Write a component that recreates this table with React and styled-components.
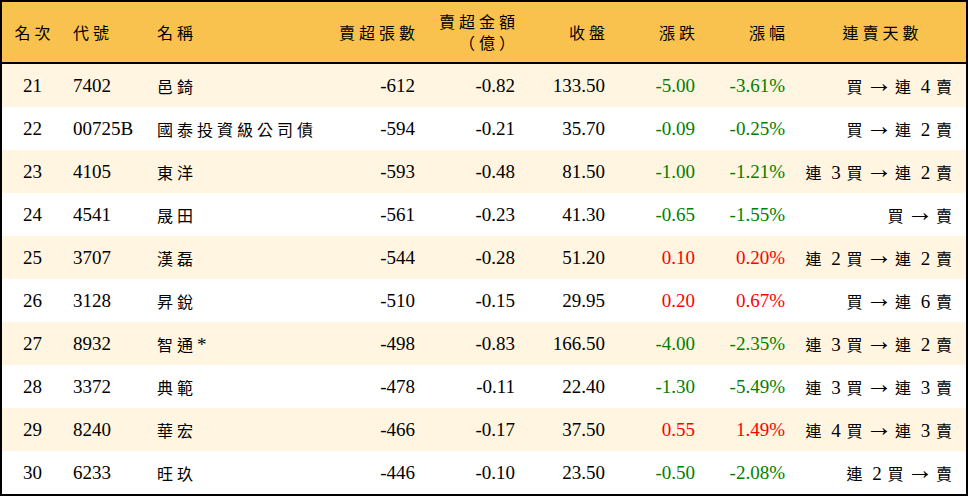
import React from 'react';
import styled, { createGlobalStyle } from 'styled-components';

const headerBg = '#f9c24f';
const stripeBg = '#fff5e0';
const up = '#ff0000';
const down = '#008000';

const rows = [
  ['21', '7402', '邑錡', '-612', '-0.82', '133.50', '-5.00', '-3.61%', '買 → 連 4 賣'],
  ['22', '00725B', '國泰投資級公司債', '-594', '-0.21', '35.70', '-0.09', '-0.25%', '買 → 連 2 賣'],
  ['23', '4105', '東洋', '-593', '-0.48', '81.50', '-1.00', '-1.21%', '連 3 買 → 連 2 賣'],
  ['24', '4541', '晟田', '-561', '-0.23', '41.30', '-0.65', '-1.55%', '買 → 賣'],
  ['25', '3707', '漢磊', '-544', '-0.28', '51.20', '0.10', '0.20%', '連 2 買 → 連 2 賣'],
  ['26', '3128', '昇銳', '-510', '-0.15', '29.95', '0.20', '0.67%', '買 → 連 6 賣'],
  ['27', '8932', '智通*', '-498', '-0.83', '166.50', '-4.00', '-2.35%', '連 3 買 → 連 2 賣'],
  ['28', '3372', '典範', '-478', '-0.11', '22.40', '-1.30', '-5.49%', '連 3 買 → 連 3 賣'],
  ['29', '8240', '華宏', '-466', '-0.17', '37.50', '0.55', '1.49%', '連 4 買 → 連 3 賣'],
  ['30', '6233', '旺玖', '-446', '-0.10', '23.50', '-0.50', '-2.08%', '連 2 買 → 賣'],
];

const GlobalStyle = createGlobalStyle`
  html, body {
    margin: 0;
    padding: 0;
    background: #fff;
  }
`;

// CJK runs get a smaller face with wider tracking, like the mingti in the shot
const Han = styled.span`
  font-family: "Noto Sans CJK TC", sans-serif;
  font-size: 16px;
  letter-spacing: 4px;
  margin-right: ${(p) => (p.$end ? '-4px' : '0')};
`;

const Arrow = styled.span`
  font-family: "Liberation Serif", serif;
  font-size: 27px;
  line-height: 0;
  vertical-align: 1px;
  margin: 0 -3px 0 -7px;
`;

const CJK = /([\u3000-\u9fff\uff00-\uffef]+|→)/;

const Txt = ({ children }) => {
  const parts = String(children).split(CJK).filter((p) => p !== '');
  return parts.map((p, i) => {
    if (p === '→') return <Arrow key={i}>{p}</Arrow>;
    if (/[\u3000-\u9fff\uff00-\uffef]/.test(p)) {
      return <Han key={i} $end={i === parts.length - 1}>{p}</Han>;
    }
    return p;
  });
};

const Sheet = styled.div`
  box-sizing: border-box;
  width: 968px;
  height: 496px;
  border: 2px solid #000;
  font-family: "Liberation Serif", "Noto Sans CJK TC", serif;
  font-size: 19px;
  color: #000;
`;

const Row = styled.div`
  display: grid;
  grid-template-columns: 61px 84px 178px 100px 100px 90px 90px 90px 1fr;
  align-items: center;
  height: 43px;
  background: ${(p) => (p.$stripe ? stripeBg : '#fff')};
`;

const HeadRow = styled(Row)`
  height: 60px;
  background: ${headerBg};
  border-bottom: 2px solid #000;
  line-height: 21px;
`;

const Cell = styled.div`
  padding: 0 10px;
  white-space: nowrap;
  text-align: ${(p) => p.$align || 'right'};
  color: ${(p) => p.$color || 'inherit'};
`;

const TrendCell = styled(Cell)`
  padding-right: 14px;
  word-spacing: 1px;
`;

const tone = (v) => (v.startsWith('-') ? down : up);

export default function App() {
  return (
    <>
      <GlobalStyle />
      <Sheet>
        <HeadRow>
          <Cell $align="center"><Txt>名次</Txt></Cell>
          <Cell $align="left"><Txt>代號</Txt></Cell>
          <Cell $align="left"><Txt>名稱</Txt></Cell>
          <Cell><Txt>賣超張數</Txt></Cell>
          <Cell>
            <Txt>賣超金額</Txt>
            <br />
            <Txt>（億）</Txt>
          </Cell>
          <Cell><Txt>收盤</Txt></Cell>
          <Cell><Txt>漲跌</Txt></Cell>
          <Cell><Txt>漲幅</Txt></Cell>
          <Cell $align="center"><Txt>連賣天數</Txt></Cell>
        </HeadRow>
        {rows.map((r, i) => (
          <Row key={r[0]} $stripe={i % 2 === 0}>
            <Cell $align="center">{r[0]}</Cell>
            <Cell $align="left">{r[1]}</Cell>
            <Cell $align="left"><Txt>{r[2]}</Txt></Cell>
            <Cell>{r[3]}</Cell>
            <Cell>{r[4]}</Cell>
            <Cell>{r[5]}</Cell>
            <Cell $color={tone(r[6])}>{r[6]}</Cell>
            <Cell $color={tone(r[7])}>{r[7]}</Cell>
            <TrendCell><Txt>{r[8]}</Txt></TrendCell>
          </Row>
        ))}
      </Sheet>
    </>
  );
}
